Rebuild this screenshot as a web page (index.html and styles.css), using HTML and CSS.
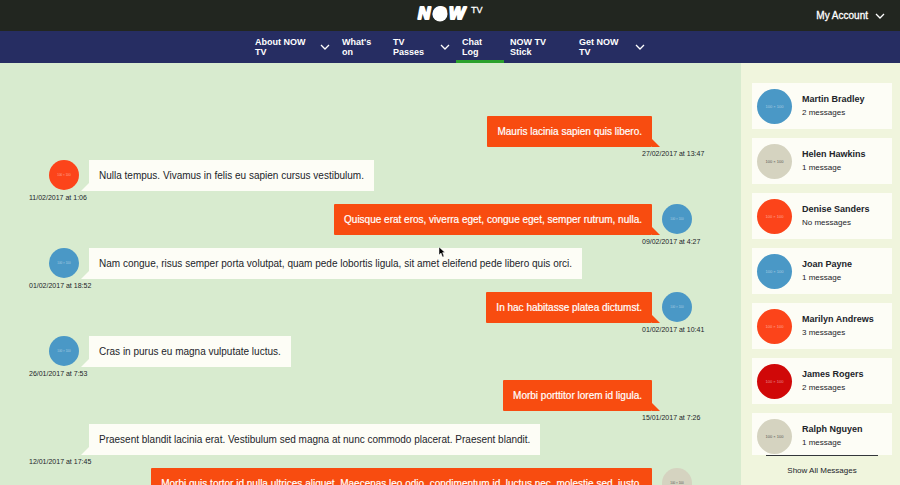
FILE: index.html
```html
<!DOCTYPE html>
<html lang="en">
<head>
<meta charset="utf-8">
<meta name="viewport" content="width=device-width, initial-scale=1">
<title>NOW TV – Chat Log</title>
<link rel="stylesheet" href="styles.css">
</head>
<body>
<header class="topbar">
  <a class="logo" href="#" aria-label="NOW TV">
    <svg width="68" height="20" viewBox="0 0 68 20">
      <circle cx="24" cy="11" r="7.500"/>
      <text class="logo-word" x="2" y="16">N</text>
      <text class="logo-word" x="33" y="16">W</text>
      <text class="logo-word" x="17" y="16">O</text>
      <text class="logo-tv" x="55" y="10">TV</text>
    </svg>
  </a>
  <button class="account" type="button">My Account
    <svg class="chevron" viewBox="0 0 10 6"><path d="M1 1l4 4 4-4"/></svg>
  </button>
</header>
<nav class="nav">
  <a class="nav-item wide" href="#"><span>About NOW TV</span><svg class="chevron" viewBox="0 0 10 6"><path d="M1 1l4 4 4-4"/></svg></a>
  <a class="nav-item narrow" href="#"><span>What's on</span></a>
  <a class="nav-item medium" href="#"><span>TV Passes</span><svg class="chevron" viewBox="0 0 10 6"><path d="M1 1l4 4 4-4"/></svg></a>
  <a class="nav-item tab active" href="#"><span>Chat Log</span></a>
  <a class="nav-item stick" href="#"><span>NOW TV Stick</span></a>
  <a class="nav-item get" href="#"><span>Get NOW TV</span><svg class="chevron" viewBox="0 0 10 6"><path d="M1 1l4 4 4-4"/></svg></a>
</nav>
<div class="page">
  <main class="chat">
    <ol class="messages">
      <li class="message sent"><div class="line"><p class="bubble">Mauris lacinia sapien quis libero.</p><span class="avatar none"></span></div><time>27/02/2017 at 13:47</time></li>
      <li class="message"><div class="line"><span class="avatar red">100 × 100</span><p class="bubble">Nulla tempus. Vivamus in felis eu sapien cursus vestibulum.</p></div><time>11/02/2017 at 1:06</time></li>
      <li class="message sent"><div class="line"><p class="bubble">Quisque erat eros, viverra eget, congue eget, semper rutrum, nulla.</p><span class="avatar blue">100 × 100</span></div><time>09/02/2017 at 4:27</time></li>
      <li class="message"><div class="line"><span class="avatar blue">100 × 100</span><p class="bubble">Nam congue, risus semper porta volutpat, quam pede lobortis ligula, sit amet eleifend pede libero quis orci.</p></div><time>01/02/2017 at 18:52</time></li>
      <li class="message sent"><div class="line"><p class="bubble">In hac habitasse platea dictumst.</p><span class="avatar blue">100 × 100</span></div><time>01/02/2017 at 10:41</time></li>
      <li class="message"><div class="line"><span class="avatar blue">100 × 100</span><p class="bubble">Cras in purus eu magna vulputate luctus.</p></div><time>26/01/2017 at 7:53</time></li>
      <li class="message sent"><div class="line"><p class="bubble">Morbi porttitor lorem id ligula.</p><span class="avatar none"></span></div><time>15/01/2017 at 7:26</time></li>
      <li class="message"><div class="line"><span class="avatar none"></span><p class="bubble">Praesent blandit lacinia erat. Vestibulum sed magna at nunc commodo placerat. Praesent blandit.</p></div><time>12/01/2017 at 17:45</time></li>
      <li class="message sent"><div class="line"><p class="bubble">Morbi quis tortor id nulla ultrices aliquet. Maecenas leo odio, condimentum id, luctus nec, molestie sed, justo.</p><span class="avatar grey">100 × 100</span></div></li>
    </ol>
  </main>
  <aside class="sidebar">
    <ul class="contacts">
      <li class="contact"><span class="avatar large blue">100 × 100</span><div><h2>Martin Bradley</h2><p>2 messages</p></div></li>
      <li class="contact"><span class="avatar large grey">100 × 100</span><div><h2>Helen Hawkins</h2><p>1 message</p></div></li>
      <li class="contact"><span class="avatar large red">100 × 100</span><div><h2>Denise Sanders</h2><p>No messages</p></div></li>
      <li class="contact"><span class="avatar large blue">100 × 100</span><div><h2>Joan Payne</h2><p>1 message</p></div></li>
      <li class="contact"><span class="avatar large red">100 × 100</span><div><h2>Marilyn Andrews</h2><p>3 messages</p></div></li>
      <li class="contact"><span class="avatar large crimson">100 × 100</span><div><h2>James Rogers</h2><p>2 messages</p></div></li>
      <li class="contact"><span class="avatar large grey">100 × 100</span><div><h2>Ralph Nguyen</h2><p>1 message</p></div></li>
    </ul>
    <button class="show-all" type="button">Show All Messages</button>
  </aside>
</div>
<svg class="cursor" width="8" height="12" viewBox="0 0 8 12"><path d="M1 1v8l2-2 1.500 4 1.500-.6L4.600 6.600H7z"/></svg>
</body>
</html>
```

FILE: styles.css
```css
* { box-sizing: border-box; }

body {
  margin: 0;
  height: 100vh;
  display: flex;
  flex-direction: column;
  overflow: hidden;
  font-family: "Liberation Sans", Arial, sans-serif;
  font-size: 10px;
  color: #22242a;
}

h2, p, ol, ul { margin: 0; padding: 0; }
ol, ul { list-style: none; }
a { color: inherit; text-decoration: none; }
button { font: inherit; color: inherit; background: none; border: 0; padding: 0; }

.topbar {
  flex: none;
  display: grid;
  grid-template-columns: 1fr auto 1fr;
  align-items: center;
  height: 31px;
  padding: 0 15px;
  background: #222620;
  color: #fff;
}
.logo { grid-column: 2; display: flex; align-items: center; height: 26px; align-self: start; }
.logo svg { fill: #fff; overflow: visible; }
.logo-word {
  font-size: 17px;
  font-weight: bold;
  font-style: italic;
  stroke: #fff;
  stroke-width: 2px;
  stroke-linejoin: round;
}
.logo-tv { font-size: 9px; stroke: #fff; stroke-width: 0.3px; }
.account {
  justify-self: end;
  display: flex;
  align-items: center;
  gap: 7px;
  line-height: 12px;
  -webkit-text-stroke: 0.3px currentColor;
}

.chevron {
  flex: none;
  width: 10px;
  height: 6px;
  fill: none;
  stroke: #fff;
  stroke-width: 1.3;
}

.nav {
  flex: none;
  display: flex;
  justify-content: center;
  height: 32px;
  background: #262d62;
  color: #fff;
  font-size: 9px;
  font-weight: bold;
  line-height: 10px;
}
.nav-item {
  display: flex;
  align-items: center;
  justify-content: space-between;
  padding: 0 6px;
  border-bottom: 3px solid transparent;
  border-top: 3px solid transparent;
}
.wide { width: 87px; }
.narrow { width: 51px; }
.medium { width: 69px; }
.tab { width: 48px; }
.stick { width: 69px; }
.get { width: 78px; }
.active { border-bottom-color: #2aa12c; }
.wide span { width: 58px; }
.medium span { width: 40px; }
.get span { width: 50px; }

.page { flex: 1; min-height: 0; display: flex; }

.chat {
  flex: 1;
  min-width: 0;
  overflow: hidden;
  background: #d8ebcf;
  padding: 53px 29px 0;
}
.message { display: flex; flex-direction: column; height: 44px; }
.line { display: flex; gap: 10px; padding: 0 20px; }
.sent .line { justify-content: flex-end; }
.bubble {
  position: relative;
  padding: 0 10px;
  line-height: 31px;
  white-space: nowrap;
  background: #fdfdf6;
}
.bubble::before {
  content: "";
  position: absolute;
  bottom: 0;
  right: 100%;
  border-left: 8px solid transparent;
  border-bottom: 8px solid #fdfdf6;
}
.sent .bubble { background: #f84c10; color: #fff; border-radius: 1px; -webkit-text-stroke: 0.2px currentColor; }
.sent .bubble::before {
  right: auto;
  left: 100%;
  border-left: 0;
  border-right: 8px solid transparent;
  border-bottom-color: #f84c10;
}
time { font-size: 7px; line-height: 13px; }
.sent time { align-self: flex-end; width: 70px; }

.avatar {
  flex: none;
  width: 30px;
  height: 30px;
  border-radius: 50%;
  text-align: center;
  font-size: 3px;
  line-height: 30px;
  color: rgba(255, 255, 255, 0.5);
}
.large { width: 35px; height: 35px; line-height: 35px; font-size: 4px; }
.blue { background: #4a98c6; }
.red { background: #fc441a; }
.crimson { background: #d00808; }
.grey { background: #d5d3c0; color: #555; }

.sidebar {
  flex: none;
  width: 159px;
  display: flex;
  flex-direction: column;
  background: #f0f5dd;
  padding: 20px 8px 0 11px;
}
.contacts { flex: 1; min-height: 0; overflow: hidden; }
.contact {
  display: flex;
  align-items: center;
  gap: 10px;
  height: 46px;
  margin-bottom: 9px;
  padding: 0 5px;
  background: #fdfdf6;
}
.contact h2 { font-size: 9px; line-height: 14px; }
.contact p { font-size: 8px; line-height: 14px; }
.show-all {
  flex: none;
  height: 30px;
  margin: 0 14px;
  border-top: 1px solid #33363a;
  font-size: 8px;
  line-height: 28px;
}

.cursor { position: absolute; left: 438px; top: 246px; stroke: #fff; stroke-width: 0.5; }
```
